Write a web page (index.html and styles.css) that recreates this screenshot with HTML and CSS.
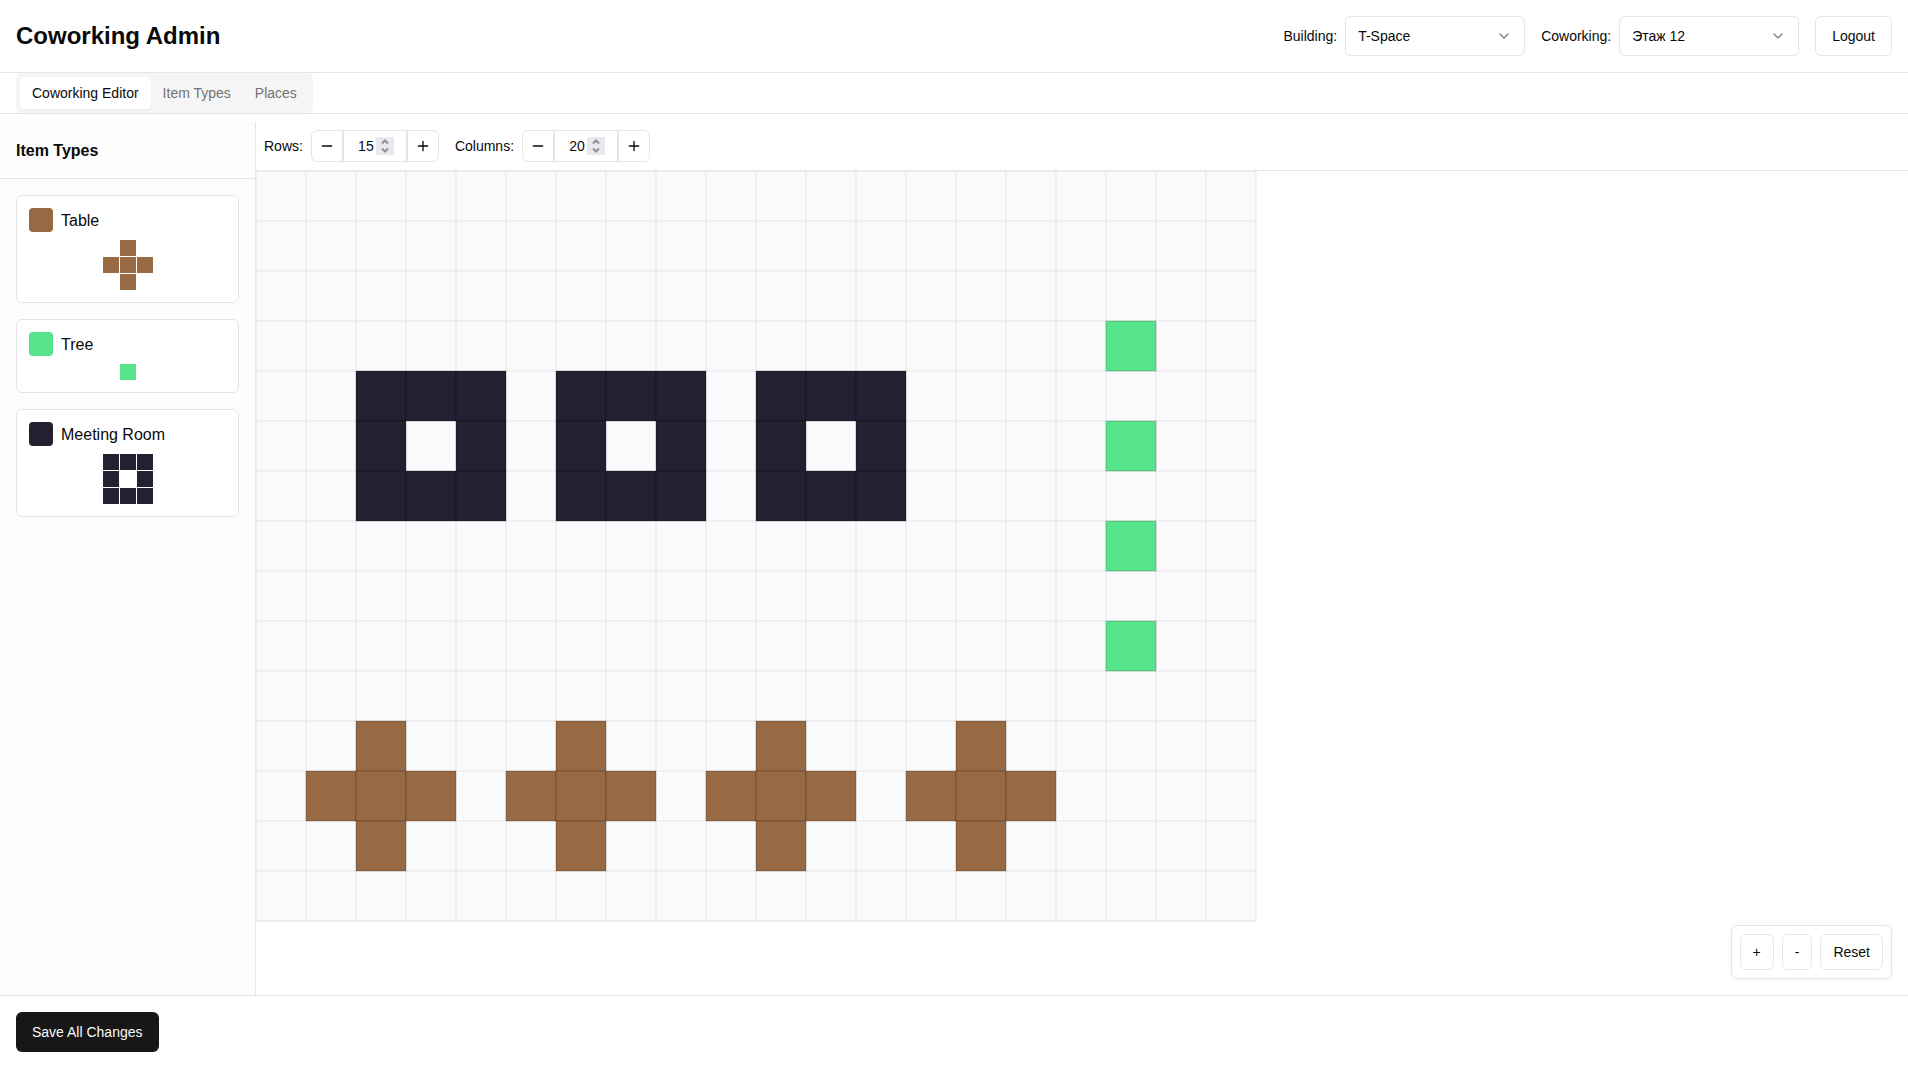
FILE: index.html
```html
<!DOCTYPE html>
<html lang="en">
<head>
<meta charset="utf-8">
<meta name="viewport" content="width=device-width, initial-scale=1">
<title>Coworking Admin</title>
<link rel="stylesheet" href="styles.css">
</head>
<body>
<div class="app">
  <header class="header">
    <h1 class="title">Coworking Admin</h1>
    <div class="header-controls">
      <div class="field">
        <label for="building">Building:</label>
        <div class="select">
          <select id="building"><option>T-Space</option></select>
          <svg class="chevron" viewBox="0 0 24 24" aria-hidden="true"><path d="m6 9 6 6 6-6"/></svg>
        </div>
      </div>
      <div class="field">
        <label for="coworking">Coworking:</label>
        <div class="select">
          <select id="coworking"><option>Этаж 12</option></select>
          <svg class="chevron" viewBox="0 0 24 24" aria-hidden="true"><path d="m6 9 6 6 6-6"/></svg>
        </div>
      </div>
      <button class="button button-large" type="button">Logout</button>
    </div>
  </header>

  <nav class="tabs-bar">
    <div class="tabs" role="tablist">
      <button class="tab tab-active" type="button" role="tab" aria-selected="true">Coworking Editor</button>
      <button class="tab" type="button" role="tab" aria-selected="false">Item Types</button>
      <button class="tab" type="button" role="tab" aria-selected="false">Places</button>
    </div>
  </nav>

  <main class="editor">
    <aside class="sidebar">
      <h2 class="sidebar-title">Item Types</h2>
      <ul class="item-list">
        <li class="item item-table">
          <div class="item-head"><span class="swatch"></span><span>Table</span></div>
          <div class="shape">
            <i></i><i class="on"></i><i></i>
            <i class="on"></i><i class="on"></i><i class="on"></i>
            <i></i><i class="on"></i><i></i>
          </div>
        </li>
        <li class="item item-tree">
          <div class="item-head"><span class="swatch"></span><span>Tree</span></div>
          <div class="shape shape-single"><i class="on"></i></div>
        </li>
        <li class="item item-room">
          <div class="item-head"><span class="swatch"></span><span>Meeting Room</span></div>
          <div class="shape">
            <i class="on"></i><i class="on"></i><i class="on"></i>
            <i class="on"></i><i></i><i class="on"></i>
            <i class="on"></i><i class="on"></i><i class="on"></i>
          </div>
        </li>
      </ul>
    </aside>

    <section class="workspace">
      <div class="toolbar">
        <div class="field">
          <label for="rows">Rows:</label>
          <div class="stepper">
            <button type="button" aria-label="Remove row"><svg class="icon" viewBox="0 0 24 24"><path d="M5 12h14"/></svg></button>
            <div class="number">
              <input id="rows" type="number" value="15">
              <svg class="spinner" viewBox="0 0 18 18" aria-hidden="true"><path d="M6 6.500l3-3 3 3M6 11.500l3 3 3-3"/></svg>
            </div>
            <button type="button" aria-label="Add row"><svg class="icon" viewBox="0 0 24 24"><path d="M5 12h14M12 5v14"/></svg></button>
          </div>
        </div>
        <div class="field">
          <label for="columns">Columns:</label>
          <div class="stepper">
            <button type="button" aria-label="Remove column"><svg class="icon" viewBox="0 0 24 24"><path d="M5 12h14"/></svg></button>
            <div class="number">
              <input id="columns" type="number" value="20">
              <svg class="spinner" viewBox="0 0 18 18" aria-hidden="true"><path d="M6 6.500l3-3 3 3M6 11.500l3 3 3-3"/></svg>
            </div>
            <button type="button" aria-label="Add column"><svg class="icon" viewBox="0 0 24 24"><path d="M5 12h14M12 5v14"/></svg></button>
          </div>
        </div>
      </div>

      <div class="canvas">
        <svg class="plan" width="1001" height="751" viewBox="0 0 1001 751" role="img" aria-label="Floor plan">
          <defs>
            <rect id="cell" width="50" height="50"/>
            <g id="table">
              <use href="#cell" x="50"/>
              <use href="#cell" y="50"/><use href="#cell" x="50" y="50"/><use href="#cell" x="100" y="50"/>
              <use href="#cell" x="50" y="100"/>
            </g>
            <g id="room">
              <use href="#cell"/><use href="#cell" x="50"/><use href="#cell" x="100"/>
              <use href="#cell" y="50"/><use href="#cell" x="100" y="50"/>
              <use href="#cell" y="100"/><use href="#cell" x="50" y="100"/><use href="#cell" x="100" y="100"/>
            </g>
          </defs>
          <rect class="floor" width="1000" height="750"/>
          <path class="grid-lines" d="M0 0V750M50 0V750M100 0V750M150 0V750M200 0V750M250 0V750M300 0V750M350 0V750M400 0V750M450 0V750M500 0V750M550 0V750M600 0V750M650 0V750M700 0V750M750 0V750M800 0V750M850 0V750M900 0V750M950 0V750M1000 0V750"/>
          <path class="grid-lines" d="M0 0H1000M0 50H1000M0 100H1000M0 150H1000M0 200H1000M0 250H1000M0 300H1000M0 350H1000M0 400H1000M0 450H1000M0 500H1000M0 550H1000M0 600H1000M0 650H1000M0 700H1000M0 750H1000"/>
          <g class="placed placed-room">
            <use href="#room" x="100" y="200"/><use href="#room" x="300" y="200"/><use href="#room" x="500" y="200"/>
          </g>
          <g class="placed placed-tree">
            <use href="#cell" x="850" y="150"/><use href="#cell" x="850" y="250"/><use href="#cell" x="850" y="350"/><use href="#cell" x="850" y="450"/>
          </g>
          <g class="placed placed-table">
            <use href="#table" x="50" y="550"/><use href="#table" x="250" y="550"/><use href="#table" x="450" y="550"/><use href="#table" x="650" y="550"/>
          </g>
        </svg>
        <div class="zoom-panel">
          <button class="button" type="button" aria-label="Zoom in">+</button>
          <button class="button" type="button" aria-label="Zoom out">-</button>
          <button class="button" type="button">Reset</button>
        </div>
      </div>
    </section>
  </main>

  <footer class="footer">
    <button class="save" type="button">Save All Changes</button>
  </footer>
</div>
</body>
</html>
```
FILE: styles.css
```css
:root {
  --text: #0a0a0a;
  --muted: #737373;
  --border: #e5e5e5;
  --table: #986a44;
  --tree: #57e389;
  --room: #241f31;
}

* { box-sizing: border-box; }

body {
  margin: 0;
  background: #fff;
  color: var(--text);
  font: 14px/20px "Liberation Sans", Arial, sans-serif;
}

button, input, select { font: inherit; color: inherit; margin: 0; }
button { cursor: pointer; }

.app { display: flex; flex-direction: column; height: 100vh; }

.header {
  display: flex;
  align-items: center;
  justify-content: space-between;
  padding: 16px;
  border-bottom: 1px solid var(--border);
}
.title { margin: 0; font-size: 24px; line-height: 32px; font-weight: 700; }
.header-controls { display: flex; align-items: center; gap: 16px; }
.field { display: flex; align-items: center; gap: 8px; }

.select { display: grid; width: 180px; align-items: center; }
.select > * { grid-area: 1 / 1; }
.select select {
  appearance: none;
  width: 100%;
  height: 40px;
  padding: 0 12px;
  border: 1px solid var(--border);
  border-radius: 6px;
  background: #fff;
}
.chevron, .icon {
  width: 16px;
  height: 16px;
  fill: none;
  stroke: currentColor;
  stroke-width: 2;
  stroke-linecap: round;
  stroke-linejoin: round;
}
.chevron { justify-self: end; margin-right: 13px; opacity: .5; pointer-events: none; }

.button {
  height: 36px;
  padding: 0 12px;
  border: 1px solid var(--border);
  border-radius: 6px;
  background: #fff;
}
.button-large { height: 40px; padding: 0 16px; }

.tabs-bar { display: flex; padding: 0 16px; border-bottom: 1px solid var(--border); }
.tabs { display: flex; padding: 4px; border-radius: 6px; background: #f5f5f5; }
.tab {
  height: 32px;
  padding: 0 12px;
  border: 0;
  border-radius: 4px;
  background: none;
  color: var(--muted);
}
.tab-active { background: #fff; color: var(--text); box-shadow: 0 1px 2px rgba(0, 0, 0, .05); }

.editor { display: flex; flex: 1; min-height: 0; margin-top: 8px; }

.sidebar { flex: none; width: 256px; border-right: 1px solid var(--border); background: #fdfdfd; }
.sidebar-title {
  margin: 0;
  padding: 17px 16px 15px;
  border-bottom: 1px solid var(--border);
  font-size: 16px;
  line-height: 24px;
}
.item-list { display: grid; gap: 16px; margin: 0; padding: 16px; list-style: none; }
.item {
  padding: 12px;
  border: 1px solid var(--border);
  border-radius: 6px;
  background: #fff;
}
.item-table { color: var(--table); }
.item-tree { color: var(--tree); }
.item-room { color: var(--room); }
.item-head { display: flex; align-items: center; gap: 8px; height: 24px; font-size: 16px; line-height: 26px; }
.item-head span:last-child { padding-top: 1px; color: var(--text); }
.swatch { width: 24px; height: 24px; border-radius: 4px; background: currentColor; }
.shape {
  display: grid;
  grid-template-columns: repeat(3, 16px);
  grid-auto-rows: 16px;
  gap: 1px;
  justify-content: center;
  margin-top: 8px;
}
.shape-single { grid-template-columns: 16px; }
.on { background: currentColor; }

.workspace { display: flex; flex: 1; flex-direction: column; min-width: 0; }
.toolbar { display: flex; gap: 16px; padding: 8px; border-bottom: 1px solid var(--border); }
.stepper { display: flex; }
.stepper button, .number {
  display: flex;
  align-items: center;
  justify-content: center;
  height: 32px;
  border: 1px solid var(--border);
  background: #fff;
}
.stepper button { width: 32px; padding: 0; }
.stepper button:first-child { border-radius: 6px 0 0 6px; }
.stepper button:last-child { border-radius: 0 6px 6px 0; }
.number { width: 64px; padding: 0 12px; }
.number input {
  appearance: textfield;
  width: 20px;
  padding: 0;
  border: 0;
  background: none;
  text-align: center;
}
.number input::-webkit-inner-spin-button { appearance: none; margin: 0; }
.spinner {
  flex: none;
  width: 18px;
  height: 18px;
  background: #e9e9ed;
  fill: none;
  stroke: #8f8f9d;
  stroke-width: 2;
}

.canvas { position: relative; flex: 1; min-height: 0; overflow: hidden; }
.plan { display: block; }
.floor { fill: #f9fafc; }
.grid-lines { fill: none; stroke: #e5e5e5; }
.placed { stroke: rgba(0, 0, 0, .2); }
.placed-table { fill: var(--table); }
.placed-tree { fill: var(--tree); }
.placed-room { fill: var(--room); }

.zoom-panel {
  position: absolute;
  right: 16px;
  bottom: 16px;
  display: flex;
  gap: 8px;
  padding: 8px;
  border: 1px solid var(--border);
  border-radius: 6px;
  background: #fff;
  box-shadow: 0 1px 3px rgba(0, 0, 0, .05);
}

.footer { padding: 16px; border-top: 1px solid var(--border); }
.save {
  height: 40px;
  padding: 0 16px;
  border: 0;
  border-radius: 6px;
  background: #171717;
  color: #fafafa;
}
```
